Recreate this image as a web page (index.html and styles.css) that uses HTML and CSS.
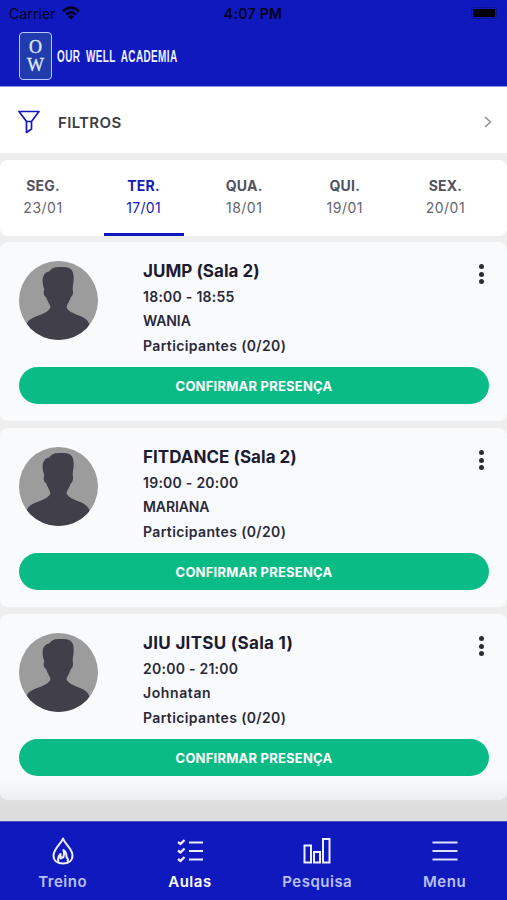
FILE: index.html
```html
<!DOCTYPE html>
<html lang="pt-BR">
<head>
<meta charset="utf-8">
<title>Our Well Academia</title>
<link rel="stylesheet" href="styles.css">
</head>
<body>
<svg width="0" height="0" class="defs">
  <symbol id="avatar" viewBox="0 0 78 78">
    <path fill="#403f4a" d="M31 46c0-3-3-6-4-10-3-2-3-5-2-8-2-6-3-12 1-16 2-2 3-1 4-2 4-5 9-4 14-4 8 0 10 4 10 11 0 4-1 7-1 11 1 3 0 7-2 8-1 4-4 7-4 10 2 5 11 7 17 10 3 2 5 4 6 8v14H7V64c1-4 3-6 7-8 7-3 15-5 17-10z"/>
  </symbol>
</svg>
<header class="header">
  <div class="status">
    <div class="carrier"><span>Carrier</span>
      <svg width="18" height="14" viewBox="0 0 18 14" fill="none" stroke="#02031c" stroke-width="2.5"><path d="M1 5.2Q9-2 17 5.2M4 8.5q5-4.3 10 0"/><path d="M9 13.5 6 10.5q3-2.3 6 0z" fill="#02031c" stroke="none"/></svg>
    </div>
    <div class="time">4:07 PM</div>
    <div class="battery"><i></i></div>
  </div>
  <div class="brand">
    <div class="mark"><span>O</span><span>W</span></div>
    <svg class="wordmark" width="130" height="24" viewBox="0 0 130 24"><text x="0" y="18" textLength="120.500" lengthAdjust="spacingAndGlyphs">OUR WELL ACADEMIA</text></svg>
  </div>
</header>
<section class="filter">
  <svg width="22" height="24" viewBox="0 0 22 24" fill="none" stroke="#1219bd" stroke-width="1.7" stroke-linejoin="round"><path d="M1 1.500h20l-7.500 10H8.500zM8.500 11.500v11l5-3.500v-7.500"/></svg>
  <span class="filter-label">FILTROS</span>
  <svg width="8" height="12" viewBox="0 0 8 12" fill="none" stroke="#8d8d8d" stroke-width="1.400"><path d="m1 1 5.500 5L1 11"/></svg>
</section>
<nav class="days">
  <div class="day"><b>SEG.</b><span>23/01</span></div>
  <div class="day active"><b>TER.</b><span>17/01</span></div>
  <div class="day"><b>QUA.</b><span>18/01</span></div>
  <div class="day"><b>QUI.</b><span>19/01</span></div>
  <div class="day"><b>SEX.</b><span>20/01</span></div>
</nav>
<main class="classes">
  <article class="card">
    <div class="info"><svg class="avatar"><use href="#avatar"/></svg>
      <div class="details"><h2>JUMP (Sala 2)</h2><p class="hours">18:00 - 18:55</p><p class="teacher">WANIA</p><p class="people">Participantes (0/20)</p></div>
      <div class="dots"><i></i><i></i><i></i></div></div>
    <button>CONFIRMAR PRESENÇA</button>
  </article>
  <article class="card">
    <div class="info"><svg class="avatar"><use href="#avatar"/></svg>
      <div class="details"><h2>FITDANCE (Sala 2)</h2><p class="hours">19:00 - 20:00</p><p class="teacher">MARIANA</p><p class="people">Participantes (0/20)</p></div>
      <div class="dots"><i></i><i></i><i></i></div></div>
    <button>CONFIRMAR PRESENÇA</button>
  </article>
  <article class="card last">
    <div class="info"><svg class="avatar"><use href="#avatar"/></svg>
      <div class="details"><h2 class="wide">JIU JITSU (Sala 1)</h2><p class="hours">20:00 - 21:00</p><p class="teacher wide">Johnatan</p><p class="people">Participantes (0/20)</p></div>
      <div class="dots"><i></i><i></i><i></i></div></div>
    <button>CONFIRMAR PRESENÇA</button>
  </article>
</main>
<footer class="tabs">
  <div class="tab"><svg width="28" height="30" viewBox="0 0 28 30" fill="none" stroke="#edf0ff" stroke-width="2" stroke-linejoin="round"><path d="M14 2.500C12 8 4.500 12.500 4.500 19.500c0 5 4 8 9.500 8s9.500-3 9.500-8c0-7-7.500-11-9.500-17z"/><path d="M9.500 26c-1-3 0-6 2-8v4.500l3-1.500c1-3 1-4 0-7 3 2 3 4 3 7 2 2 2 3 1 5"/></svg><span>Treino</span></div>
  <div class="tab selected"><svg width="28" height="30" viewBox="0 0 28 30" fill="none" stroke="#edf0ff" stroke-width="2"><path d="M13 6.500h14M13 15h14M13 23.500h14"/><path stroke-width="2.300" d="M2 6l2.500 2L8.500 4M2 14.500l2.500 2 4-4M2 23l2.500 2 4-4"/></svg><span>Aulas</span></div>
  <div class="tab"><svg width="28" height="30" viewBox="0 0 28 30" fill="none" stroke="#edf0ff" stroke-width="2"><path d="M1.500 9.500h6.500v17H1.500zM11 16h6v10.500h-6zM20 3h6.500v23.500H20z"/></svg><span>Pesquisa</span></div>
  <div class="tab"><svg width="28" height="30" viewBox="0 0 28 30" stroke="#dfe2ff" stroke-width="2"><path d="M1.500 6.500h25M1.500 15h25M1.500 23.500h25"/></svg><span>Menu</span></div>
</footer>
</body>
</html>
```
FILE: styles.css
```css
* { box-sizing: border-box; }
body { margin: 0; width: 507px; height: 900px; overflow: hidden; display: flex; flex-direction: column; background: #eee; font-family: Inter, Roboto, sans-serif; color: #2a2938; }
.defs { position: absolute; }
.header { height: 87px; background: #0f19bd; border-bottom: 1px solid #8f94dd; }
.status { height: 26px; padding: 0 10px 0 9px; display: grid; grid-template-columns: 1fr 1fr 1fr; align-items: center; color: #02031c; font-size: 14px; }
.carrier { display: flex; align-items: center; gap: 6px; letter-spacing: .1px; }
.time { text-align: center; font-weight: 600; letter-spacing: .3px; }
.battery { justify-self: end; width: 26px; height: 12px; padding: 1px; border: 1px solid #0b138b; border-radius: 3px; }
.battery i { display: block; height: 8px; width: 22px; background: #000; border-radius: 1px; }
.brand { display: flex; align-items: center; gap: 5px; padding: 6px 0 0 19px; }
.mark { width: 33px; height: 48px; background: #203bab; border: 1.500px solid #b9c8ff; border-radius: 4px; display: flex; flex-direction: column; align-items: center; justify-content: center; font: 400 18px/18px "Liberation Serif", serif; -webkit-text-stroke: .4px #dce7ff; color: #dce7ff; }
.wordmark { overflow: visible; }
.wordmark text { font: 700 16px "Liberation Sans", sans-serif; letter-spacing: .6px; word-spacing: 4px; fill: #eef1ff; }
.filter { height: 66px; background: #fff; padding: 4px 15px 0 18px; display: flex; align-items: center; }
.filter-label { margin-left: 18px; flex: 1; font-size: 15px; font-weight: 600; letter-spacing: .35px; color: #3d3d42; }
.days { height: 76px; margin-top: 7px; background: #fff; border-radius: 8px; display: grid; grid-template-columns: repeat(5, 80px); column-gap: 20.600px; padding-left: 3px; }
.day { display: flex; flex-direction: column; align-items: center; padding-top: 14.500px; font-size: 14px; line-height: 22px; letter-spacing: .5px; color: #65656e; }
.day b { color: #515260; font-weight: 700; letter-spacing: .2px; }
.day.active, .day.active b { color: #1219bd; }
.day.active span { letter-spacing: .3px; }
.day.active { border-bottom: 4px solid #0f19bd; margin-bottom: -1px; }
.classes { height: 585px; padding-top: 6px; display: flex; flex-direction: column; gap: 7px; background: linear-gradient(#eee 85%, #ddd 98%); }
.card { flex: 0 0 179px; background: #f9fafc; border-radius: 8px; padding: 19px 18px 0 19px; }
.card.last { background: linear-gradient(#f9fafc 88%, #eceeef); flex-basis: 186px; }
.info { display: flex; height: 106px; }
.avatar { width: 79px; height: 79px; border-radius: 50%; background: #9c9c9c; }
.details { margin-left: 45px; flex: 1; }
h2 { margin: 0 0 2.500px; font-size: 17px; line-height: 21px; font-weight: 700; letter-spacing: .03px; color: #1c1b31; white-space: nowrap; }
h2.wide { letter-spacing: .3px; }
p { margin: 0; font-size: 14px; line-height: 24.500px; font-weight: 600; }
.hours { letter-spacing: .25px; }
.people { letter-spacing: .37px; }
.teacher { letter-spacing: -.1px; }
.teacher.wide { letter-spacing: .6px; }
.dots { display: flex; flex-direction: column; gap: 2.500px; padding: 3px 5px 0 0; }
.dots i { width: 5px; height: 5px; border-radius: 50%; background: #2c2c34; }
button { display: block; width: 470px; height: 37px; border: 0; border-radius: 19px; background: #0bbb86; color: #fff; font: 700 13px Inter, sans-serif; letter-spacing: .22px; }
.tabs { height: 79px; background: #0f19bd; border-top: 1px solid #4b51bd; display: grid; grid-template-columns: repeat(4, 127.300px); margin-left: -1px; padding-top: 14px; }
.tab { display: flex; flex-direction: column; align-items: center; font-size: 15px; font-weight: 600; line-height: 31px; letter-spacing: .5px; color: #b9c0f5; }
.tab.selected { color: #fff; }
```
